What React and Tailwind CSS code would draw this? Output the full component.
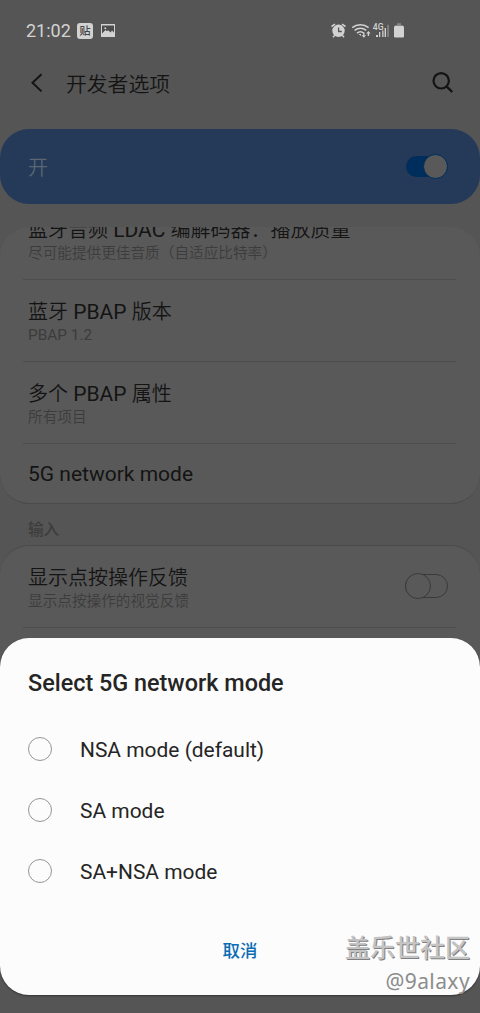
const FONT = "font-['Roboto','Noto_Sans_CJK_SC',sans-serif]";

function StatusBar() {
  return (
    <div className="flex h-[44px] shrink-0 items-start pl-[26px] pt-[22px] text-[#d2d2d2]">
      <span className="w-[51px] whitespace-nowrap text-[18px] leading-[18px]">21:02</span>
      <span className="mt-px flex size-[16px] items-center justify-center rounded-[3px] bg-[#d2d2d2] text-[11px] font-medium leading-none text-[#444]">
        贴
      </span>
      <svg className="ml-[8px] mt-[2px]" width="14" height="13" viewBox="0 0 14 13">
        <path d="M0 0h14v13H0z" fill="#d2d2d2" />
        <path d="M1 1.5h12v7L11 6.5 9.5 8.5 7.5 6.5 5.5 7 4.5 6 1 9.5z" fill="#4c4c4c" />
        <circle cx="4.3" cy="4.3" r="1" fill="#d2d2d2" />
      </svg>
      <svg className="ml-[216px]" width="75" height="16" viewBox="331 22 75 16">
        <g fill="none" stroke="#d2d2d2" strokeWidth="1.5">
          <path d="M331.5 26.5 335 24.2M345.5 26.5 342 24.2M334.5 35.5 333 37.2M342.5 35.5 344 37.2" />
          <path d="M352.2 27.6a13 13 0 0 1 16.4 0M354.6 30.4a9.2 9.2 0 0 1 11.6 0M357 33.1a5.3 5.3 0 0 1 6.8 0" />
        </g>
        <circle cx="338.5" cy="30.8" r="6.2" fill="#d2d2d2" />
        <path d="M338.6 27.5v4h3.2" fill="none" stroke="#555" strokeWidth="1.3" />
        <path d="M358.5 34h2.5v2z M363.2 32.5h1.3v2.8h1.5l-2.2 2.4-2.2-2.4h1.6z M367.7 36v-2.5h-1.5l2.2-2.6 2.2 2.6h-1.5V36z" fill="#d2d2d2" />
        <text x="372.8" y="30.2" fontSize="8.6" fontWeight="500" fill="#d2d2d2">4G</text>
        <path d="M376 35h2v2h-2zM379 32h1.3v5H379zM382.2 30.5h1.3V37h-1.3zM384.6 28h1.4v9h-1.4z" fill="#d2d2d2" />
        <path d="M387.2 24.8h1.7V37h-1.7z" fill="#858585" />
        <path d="M397 23.3h4V25h2v2h-8v-2h2z" fill="#858585" />
        <rect x="394" y="26" width="10" height="11.5" rx="1.2" fill="#d2d2d2" />
      </svg>
    </div>
  );
}

function Header() {
  return (
    <div className="flex h-[85px] shrink-0 items-start pl-[30px] text-[#141414]">
      <svg className="mt-[29px]" width="14" height="20" viewBox="0 0 14 20">
        <path d="M11.5 1.2 2.5 9.8l9 8.6" fill="none" stroke="currentColor" strokeWidth="2" />
      </svg>
      <h1 className="ml-[22px] mt-[26px] text-[20.8px] font-[350] leading-[30px]">开发者选项</h1>
      <svg className="ml-auto mr-[26px] mt-[27px]" width="22" height="22" viewBox="0 0 22 22">
        <circle cx="9.2" cy="9.8" r="7.7" fill="none" stroke="currentColor" strokeWidth="2.2" />
        <path d="m14.6 15.4 5.6 5.6" stroke="currentColor" strokeWidth="2.4" />
      </svg>
    </div>
  );
}

function Latin({ children }) {
  return <span className="text-[21px] font-normal">{children}</span>;
}

function Row({ title, sub, children }) {
  return (
    <div className="ml-[23px] mr-[24px] flex h-[82px] shrink-0 items-start border-b border-[#4d4d4d] pl-[5px]">
      <div className="pt-[18px]">
        <div className="h-[26px] whitespace-nowrap text-[20px] font-[350] leading-[28px] text-[#141414]">{title}</div>
        <div className="whitespace-nowrap text-[14.65px] font-[350] leading-[23px] text-[#3c3c3c]">{sub}</div>
      </div>
      {children}
    </div>
  );
}

function Option({ label }) {
  return (
    <label className="flex h-[61px] items-center">
      <span className="size-[24px] rounded-full border border-[#969696]" />
      <span className="ml-[28px] pt-[2px] text-[20.95px] leading-[28px] text-[#252525]">{label}</span>
    </label>
  );
}

export default function App() {
  return (
    <div className={`relative flex h-[1013px] w-[480px] flex-col overflow-hidden bg-[#555555] ${FONT}`}>
      <StatusBar />
      <Header />
      <div className="flex h-[75px] shrink-0 items-center justify-between rounded-[29px] bg-[#243a58] pl-[28px] pr-[32px]">
        <span className="pt-[3px] text-[20px] font-[350] leading-[26px] text-[#5b6672]">开</span>
        <span className="flex h-[21px] w-[42px] items-center justify-end rounded-full bg-[#002e5c]">
          <span className="size-[25px] shrink-0 rounded-full border border-[#002e5c] bg-[#595959]" />
        </span>
      </div>
      <div className="mt-[23px] flex h-[277px] shrink-0 flex-col overflow-hidden rounded-[29px] border-b border-[#4b4b4b] bg-[#595959]">
        <div className="-mt-[29px] flex flex-col">
          <Row title={<>蓝牙音频<Latin> LDAC </Latin>编解码器：播放质量</>} sub="尽可能提供更佳音质（自适应比特率）" />
          <Row title={<>蓝牙<Latin> PBAP </Latin>版本</>} sub={<span className="text-[15.4px] font-normal">PBAP 1.2</span>} />
          <Row title={<>多个<Latin> PBAP </Latin>属性</>} sub="所有项目" />
          <div className="pl-[28px] pt-[17px] text-[21px] leading-[26px] text-[#141414]">5G network mode</div>
        </div>
      </div>
      <div className="h-[41px] shrink-0 pl-[28px] pt-[15px] text-[15.6px] font-medium leading-[22px] text-[#3c3c3c]">输入</div>
      <div className="h-[140px] shrink-0 rounded-t-[29px] border-t border-[#4b4b4b] bg-[#595959]">
        <Row title="显示点按操作反馈" sub="显示点按操作的视觉反馈">
          <span className="ml-auto mr-[8px] mt-[28px] flex h-[24px] w-[43px] items-center rounded-full border border-[#3a3a3a]">
            <span className="-ml-px size-[26px] shrink-0 rounded-full border border-[#3a3a3a] bg-[#595959]" />
          </span>
        </Row>
      </div>

      <div className="absolute inset-x-0 top-[638px] flex h-[357px] flex-col rounded-[29px] bg-[#fcfcfc] px-[28px] pt-[30px] shadow-[0_1px_2px_rgba(0,0,0,0.4)]">
        <h2 className="text-[23.4px] font-medium leading-[30px] text-[#252525]">Select 5G network mode</h2>
        <div className="mt-[20px] flex flex-col">
          <Option label="NSA mode (default)" />
          <Option label="SA mode" />
          <Option label="SA+NSA mode" />
        </div>
        <button className="mt-[36px] self-center text-[17.4px] font-medium leading-[28px] text-[#0a6cb4]">取消</button>
      </div>

      <div className="absolute right-[10px] top-[931px] flex flex-col items-end whitespace-nowrap">
        <span className="text-[25px] font-medium leading-[36px] text-[#c4c4c4] [text-shadow:1px_1px_0_#808080]">盖乐世社区</span>
        <span className="font-['Noto_Sans',sans-serif] text-[21px] leading-[28px] tracking-[0.4px] text-[#8c8c8c]">@9alaxy</span>
      </div>
    </div>
  );
}
